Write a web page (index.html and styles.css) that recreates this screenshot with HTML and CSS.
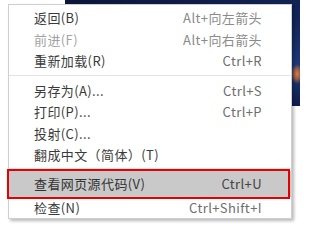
FILE: index.html
```html
<!DOCTYPE html>
<html lang="zh-CN">
<head>
<meta charset="utf-8">
<link rel="stylesheet" href="styles.css">
</head>
<body>
<div class="page">
  <div class="banner"></div>
  <div class="menu">
    <div class="item"><span class="label">返回(B)</span><span class="key">Alt+向左箭头</span></div>
    <div class="item disabled"><span class="label">前进(F)</span><span class="key">Alt+向右箭头</span></div>
    <div class="item"><span class="label">重新加载(R)</span><span class="key">Ctrl+R</span></div>
    <div class="sep"></div>
    <div class="item"><span class="label">另存为(A)...</span><span class="key">Ctrl+S</span></div>
    <div class="item"><span class="label">打印(P)...</span><span class="key">Ctrl+P</span></div>
    <div class="item"><span class="label">投射(C)...</span></div>
    <div class="item"><span class="label">翻成中文（简体）(T)</span></div>
    <div class="sep sep-tight"></div>
    <div class="item hover"><span class="label">查看网页源代码(V)</span><span class="key">Ctrl+U</span></div>
    <div class="item last"><span class="label">检查(N)</span><span class="key">Ctrl+Shift+I</span></div>
  </div>
  <div class="annot"></div>
</div>
</body>
</html>
```

FILE: styles.css
```css
html, body {
  margin: 0;
  padding: 0;
  background: #ffffff;
}
.page {
  position: relative;
  width: 300px;
  height: 225px;
  overflow: hidden;
  background: #ffffff;
  font-family: "Noto Sans CJK SC", "Noto Sans", sans-serif;
}
.banner {
  position: absolute;
  left: 65px;
  top: 0;
  width: 235px;
  height: 106px;
  background:
    radial-gradient(ellipse 6px 10px at 232px 74px, #e8792e 0%, rgba(232,121,46,0.6) 50%, rgba(232,121,46,0) 100%),
    linear-gradient(160deg, #0b1638 0%, #13255a 55%, #1d3a7a 80%, #0e1c48 100%);
}
.menu {
  position: absolute;
  left: 8px;
  top: 4px;
  width: 282px;
  background: #ffffff;
  border: 1px solid #cfcfcf;
  box-shadow: 2px 2px 3px rgba(0, 0, 0, 0.28);
  padding-top: 2px;
  font-size: 13px;
  letter-spacing: 0.4px;
}
.item {
  display: flex;
  align-items: center;
  justify-content: space-between;
  height: 21.5px;
  padding-left: 25px;
  padding-right: 29px;
  color: #3a3a3a;
  white-space: nowrap;
}
.item .key {
  color: #6e6e6e;
}
.item.disabled .label {
  color: #a2a2a2;
}
.item.disabled .key,
.item:first-child .key {
  color: #8a8a8a;
}
.sep {
  height: 1px;
  background: #e3e3e3;
  margin: 3.5px 0;
}
.sep.sep-tight {
  margin: 2px 0 2.25px;
}
.item.hover {
  height: 26px;
  background: #c9c9c9;
  color: #333333;
}
.item.hover .key {
  color: #444444;
}
.item.last {
  height: 21px;
}
.annot {
  position: absolute;
  left: 7px;
  top: 169px;
  width: 283px;
  height: 30px;
  box-sizing: border-box;
  border: 2px solid #e80000;
}
```
